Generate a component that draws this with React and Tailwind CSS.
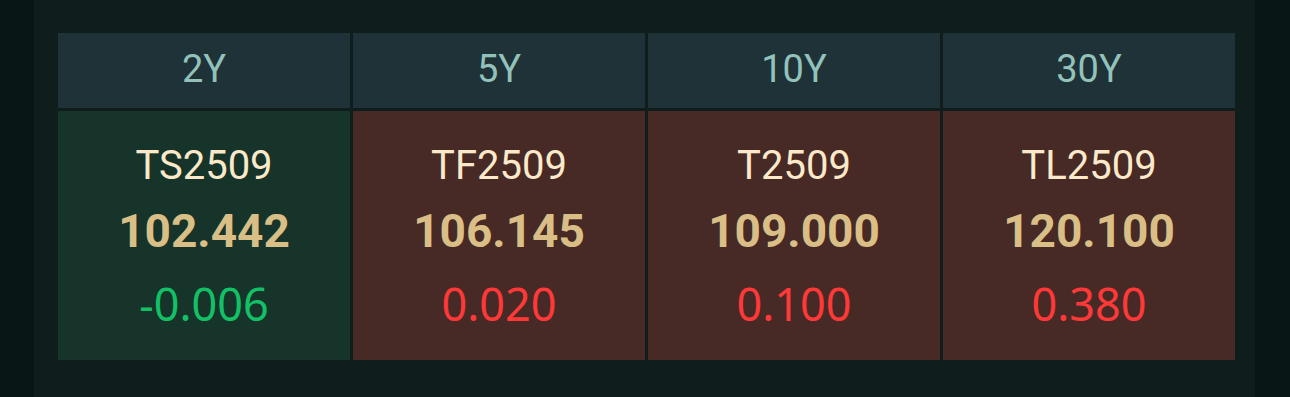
import React from 'react';

const contracts = [
  { tenor: '2Y', code: 'TS2509', price: '102.442', change: '-0.006', up: false },
  { tenor: '5Y', code: 'TF2509', price: '106.145', change: '0.020', up: true },
  { tenor: '10Y', code: 'T2509', price: '109.000', change: '0.100', up: true },
  { tenor: '30Y', code: 'TL2509', price: '120.100', change: '0.380', up: true },
];

export default function App() {
  return (
    <div className="w-[1290px] h-[397px] bg-[#091616] flex">
      <div className="ml-[34px] w-[1221px] h-full bg-[#0f1d1d] pt-[33px] pl-[24px]">
        <div className="grid grid-cols-[repeat(4,292px)] grid-rows-[75px_249px] gap-[3px]">
          {contracts.map((c) => (
            <div
              key={c.tenor}
              className="bg-[#1f3238] flex items-center justify-center pb-[3px] text-[38px] leading-none text-[#93c2bb] font-['Roboto',sans-serif]"
            >
              {c.tenor}
            </div>
          ))}
          {contracts.map((c) => (
            <div
              key={c.code}
              className={`${c.up ? 'bg-[#472a26]' : 'bg-[#16342a]'} flex flex-col items-center pt-[35px]`}
            >
              <div className="text-[40px] leading-none text-[#fbe9c9] font-['Roboto',sans-serif]">{c.code}</div>
              <div className="mt-[22px] text-[46px] leading-none font-bold text-[#d9bf86] font-['Roboto',sans-serif]">
                {c.price}
              </div>
              <div
                className={`mt-[27px] text-[45px] leading-none font-['Noto_Sans',sans-serif] ${
                  c.up ? 'text-[#ff3838]' : 'text-[#13c065]'
                }`}
              >
                {c.change}
              </div>
            </div>
          ))}
        </div>
      </div>
    </div>
  );
}
